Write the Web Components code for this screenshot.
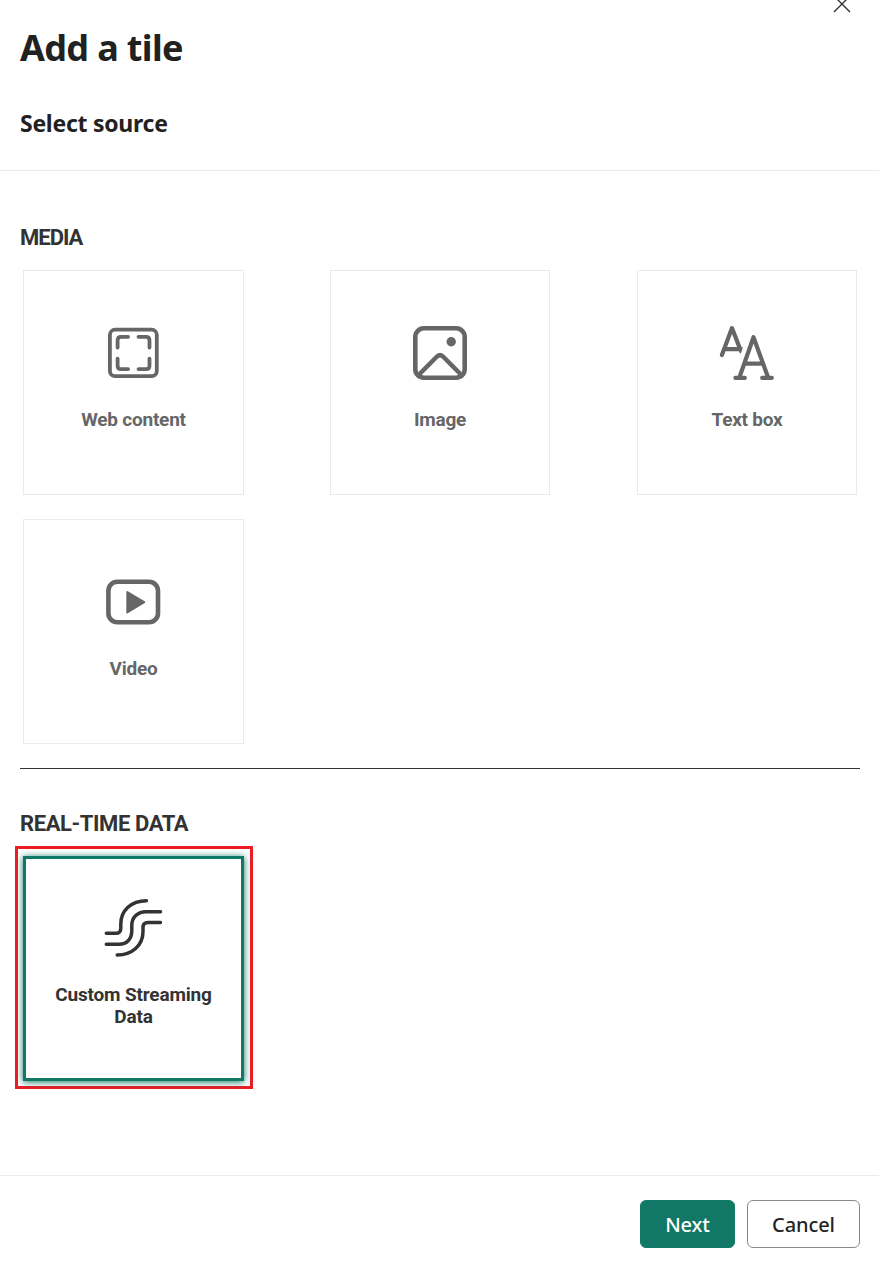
<!DOCTYPE html>
<html lang="en">
<head>
<meta charset="utf-8">
<title>Add a tile</title>
<style>
html,body{margin:0;height:100%;background:#fff}
body{font-family:"Noto Sans","Open Sans",sans-serif;color:#212121;overflow:hidden}
</style>
</head>
<body>
<add-tile-dialog></add-tile-dialog>
<script>
const define = (name, html, setup) => {
  const t = document.createElement('template');
  t.innerHTML = html;
  customElements.define(name, class extends HTMLElement {
    constructor() {
      super();
      this.attachShadow({mode: 'open'}).append(t.content.cloneNode(true));
    }
    connectedCallback() { if (setup) setup(this); }
  });
};

const icons = {
  web: `<g stroke-width="3.8"><rect x="8.9" y="8.7" width="46.9" height="46.5" rx="5.2"/><path d="M16.6 26.5V19.3Q16.6 15.8 20.1 15.8H27.1M37.5 15.8H45Q48.5 15.8 48.5 19.3V26.5M48.5 37.6V44.7Q48.5 48.1 45 48.1H37.5M27.1 48.1H20.1Q16.6 48.1 16.6 44.7V37.6"/></g>`,
  image: `<g stroke-width="4.6"><rect x="7.3" y="7.3" width="49.4" height="49.4" rx="8.5"/><path d="M10.6 54L28.5 36Q32 32.2 35.5 36L53.4 54"/></g><circle cx="43.2" cy="20.7" r="4.7" fill="currentColor" stroke="none"/>`,
  text: `<g stroke-width="4.2"><path d="M24.3 56.7L38.5 16.2L53.2 56.7M20.4 56.9H29.8M47.2 56.9H56.8M29.6 42.7H47.4"/><path d="M6.9 34L17 7.1L25.2 28.2H10"/></g><path d="M22.5 27L27.8 26L25.8 32.7L24.5 31.5Z" fill="currentColor" stroke="none"/>`,
  video: `<rect x="7.4" y="11.8" width="49.6" height="40.4" rx="9" stroke-width="4.6"/><path d="M26.3 22L43.2 32.2L26.3 42.4Z" fill="currentColor" stroke-width="2"/>`,
  stream: `<path stroke-width="3.5" d="M45.4 7.7C30.2 7.7 19.8 17.5 19.8 31V35.2Q19.8 40.3 14.7 40.3H5.3M59.5 18.7H45.2C36.5 18.7 30.8 24.5 30.8 32.5V37.5C30.8 45.8 26 51.3 18 51.3H5.3M59.5 29.5H47Q42 29.5 42 34.5V38.5C42 52.5 31 62 16.2 62"/>`
};

define('tile-icon', `<style>
:host{display:block;width:64px;height:64px}
svg{display:block;fill:none;stroke:currentColor;stroke-linecap:round;stroke-linejoin:round}
</style><svg width="64" height="64" viewBox="0 0 64 64"></svg>`,
  el => el.shadowRoot.querySelector('svg').innerHTML = icons[el.getAttribute('name')]);

define('source-tile', `<style>
:host{display:block;box-sizing:border-box;width:220px;height:225px;padding-top:51px;color:#666;
 box-shadow:inset 0 0 0 1px #eaeaea;font:700 19px/22px Roboto,sans-serif;letter-spacing:-.22px}
:host([wide]){width:221px}
:host([selected]){padding-top:37px;color:#333;box-shadow:inset 0 0 0 3px #117865,0 1px 7px 0 #117865}
::slotted(tile-icon){margin-left:78px}
.label{margin-top:24px;text-align:center}
:host([selected]) .label{margin-top:27px;letter-spacing:-.17px}
</style><slot name="icon"></slot><div class="label"><slot></slot></div>`);

define('source-section', `<style>
:host{display:block}
h3{margin:0 0 19px;font:700 22px/26px Roboto,sans-serif;color:#333}
h3 span{letter-spacing:var(--heading-spacing,0)}
.grid{display:grid;grid-template-columns:307px 307px 220px;row-gap:24px;padding-left:3px}
</style><h3><span><slot name="heading"></slot></span></h3><div class="grid"><slot></slot></div>`);

define('focus-frame', `<style>
:host{display:block;box-sizing:border-box;width:238px;height:243px;border:3px solid #ed1c24;padding:7px 5px;margin:-10px 0 0 -8px}
</style><slot></slot>`);

define('action-button', `<style>
:host{display:block}
button{display:block;box-sizing:border-box;width:113px;height:48px;padding:2px 0 0;border:1px solid #8a8a8a;border-radius:6px;
 background:#fff;color:#242424;font:500 20px/44px "Noto Sans","Open Sans",sans-serif;letter-spacing:-.1px}
:host([primary]) button{width:95px;background:#117865;border-color:#117865;color:#fff}
</style><button><slot></slot></button>`);

define('close-button', `<style>
:host{display:block;position:absolute;top:-4px;right:28px;width:18px;height:17px;color:#333}
svg{display:block}
</style><svg width="18" height="17" viewBox="0 0 18 17"><path d="M1 0L17 16M17 0L1 16" fill="none" stroke="currentColor" stroke-width="1.4"/></svg>`);

define('add-tile-dialog', `<style>
:host{display:flex;flex-direction:column;height:1267px;background:#fff}
header{position:relative;box-sizing:border-box;height:171px;padding:23px 20px 0;border-bottom:1px solid #eaeaea}
h1{margin:0;font-size:36px;line-height:50px;font-weight:700;letter-spacing:-.65px}
h2{margin:35px 0 0;font-size:23px;line-height:30px;font-weight:700;letter-spacing:-.27px}
main{flex:1;padding:54px 19px 0 20px}
.media{--heading-spacing:-1px}
.realtime{--heading-spacing:-.4px}
hr{height:1px;margin:24px 0 42px;border:0;background:#333}
footer{box-sizing:border-box;height:92px;border-top:1px solid #eaeaea;padding:24px 19px 0;display:flex;justify-content:flex-end;gap:12px}
</style>
<header><h1>Add a tile</h1><h2>Select source</h2><close-button></close-button></header>
<main>
<source-section class="media"><span slot="heading">MEDIA</span>
<source-tile wide><tile-icon slot="icon" name="web"></tile-icon>Web content</source-tile>
<source-tile><tile-icon slot="icon" name="image"></tile-icon>Image</source-tile>
<source-tile><tile-icon slot="icon" name="text"></tile-icon>Text box</source-tile>
<source-tile wide><tile-icon slot="icon" name="video"></tile-icon>Video</source-tile>
</source-section>
<hr>
<source-section class="realtime"><span slot="heading">REAL-TIME DATA</span>
<focus-frame><source-tile wide selected><tile-icon slot="icon" name="stream"></tile-icon>Custom Streaming<br>Data</source-tile></focus-frame>
</source-section>
</main>
<footer><action-button primary>Next</action-button><action-button>Cancel</action-button></footer>`);
</script>
</body>
</html>
